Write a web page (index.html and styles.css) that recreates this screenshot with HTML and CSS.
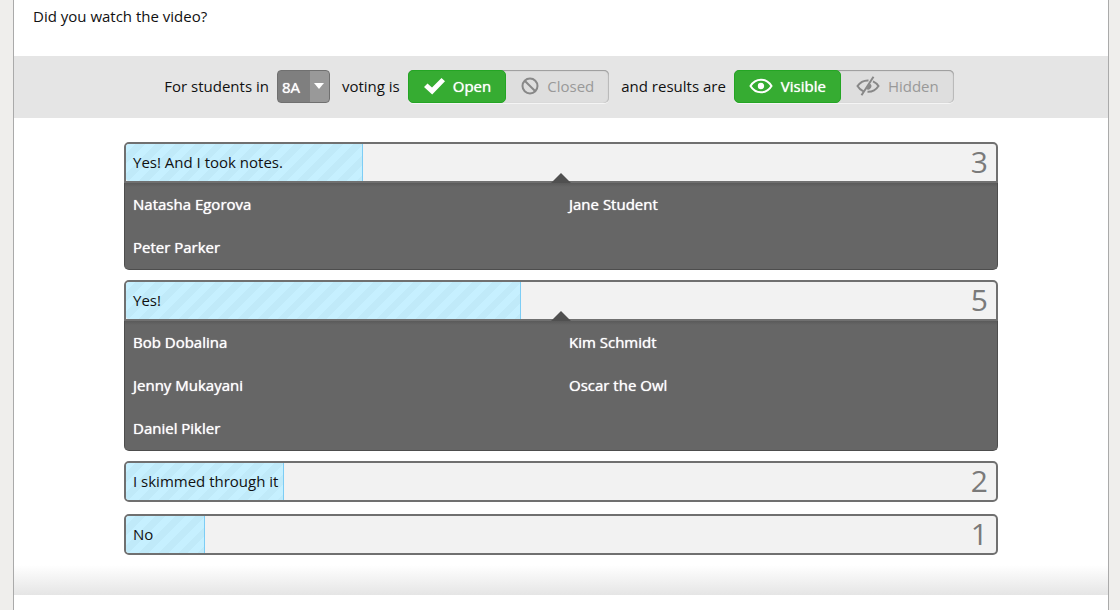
FILE: index.html
```html
<!DOCTYPE html>
<html lang="en">
<head>
<meta charset="utf-8">
<title>Class poll</title>
<link rel="stylesheet" href="styles.css">
</head>
<body>
<main class="sheet">
  <section class="poll">
    <p class="question">Did you watch the video?</p>

    <div class="controls">
      <label for="group">For students in</label>
      <span class="picker">
        <select id="group"><option>8A</option></select>
        <svg class="picker-arrow" viewBox="0 0 10 6" aria-hidden="true"><path d="M0 0h10L5 6z"/></svg>
      </span>
      <span class="label-voting">voting is</span>
      <div class="switch" role="group" aria-label="Voting">
        <button type="button" class="choice choice-on" aria-pressed="true">
          <svg class="icon icon-check" viewBox="0 0 22 18" aria-hidden="true"><path d="M1 10l3.500-3.500L9 10.500 18.500 1 22 4.300 9.200 17.500z"/></svg>
          Open
        </button>
        <button type="button" class="choice" aria-pressed="false">
          <svg class="icon icon-ban" viewBox="0 0 18 18" aria-hidden="true"><circle cx="9" cy="9" r="7.500"/><path d="M3.700 3.700l10.600 10.600"/></svg>
          Closed
        </button>
      </div>
      <span class="label-results">and results are</span>
      <div class="switch" role="group" aria-label="Results">
        <button type="button" class="choice choice-on" aria-pressed="true">
          <svg class="icon icon-eye" viewBox="0 0 24 16" aria-hidden="true"><path d="M1.500 8C4 3.800 7.500 1.700 12 1.700S20 3.800 22.500 8C20 12.200 16.500 14.300 12 14.300S4 12.200 1.500 8z"/><circle class="pupil" cx="12" cy="8" r="3.200"/></svg>
          Visible
        </button>
        <button type="button" class="choice" aria-pressed="false">
          <svg class="icon icon-eye-off" viewBox="0 0 24 20" aria-hidden="true"><path d="M12.500 4.400C7.800 4.200 4 6.200 1.500 10c1.500 2.400 3.400 4.200 5.600 5.200M17 5.300c2.200 1 4.100 2.600 5.500 4.700-2.600 4-6.300 6-11 5.800M17.500.700L5.500 19.300"/><path class="pupil" d="M13.800 7.500a3.300 3.300 0 0 1-3.600 5.600z"/></svg>
          Hidden
        </button>
      </div>
    </div>

    <div class="results">
      <article class="answer answer-open">
        <div class="bar">
          <div class="fill" style="width: 27.27%"></div>
          <span class="text">Yes! And I took notes.</span>
          <span class="count">3</span>
          <span class="pointer"></span>
        </div>
        <ul class="voters"><li>Natasha Egorova</li><li>Jane Student</li><li>Peter Parker</li></ul>
      </article>
      <article class="answer answer-open">
        <div class="bar">
          <div class="fill" style="width: 45.45%"></div>
          <span class="text">Yes!</span>
          <span class="count">5</span>
          <span class="pointer"></span>
        </div>
        <ul class="voters"><li>Bob Dobalina</li><li>Kim Schmidt</li><li>Jenny Mukayani</li><li>Oscar the Owl</li><li>Daniel Pikler</li></ul>
      </article>
      <article class="answer">
        <div class="bar">
          <div class="fill" style="width: 18.18%"></div>
          <span class="text">I skimmed through it</span>
          <span class="count">2</span>
        </div>
      </article>
      <article class="answer">
        <div class="bar">
          <div class="fill" style="width: 9.09%"></div>
          <span class="text">No</span>
          <span class="count">1</span>
        </div>
      </article>
    </div>
  </section>
</main>
</body>
</html>
```

FILE: styles.css
```css
* { box-sizing: border-box; }

body {
  margin: 0;
  background: #efeeec;
  color: #111;
  font: 15px/20px "Open Sans", "Noto Sans", sans-serif;
}

.sheet {
  min-height: 100vh;
  margin: 0 11px 0 13px;
  border: solid #aaa;
  border-width: 0 1px;
  background: #fff;
}

.poll {
  padding-bottom: 40px;
  background: linear-gradient(to top, #e5e5e5, #fff 30px);
}

.question {
  margin: 0;
  padding: 6px 19px 30px;
}

.controls {
  display: flex;
  align-items: center;
  justify-content: center;
  padding: 14px 4px 15px 0;
  background: #e5e5e5;
}

.controls > label,
.label-voting,
.label-results { padding-bottom: 2px; }

.picker {
  position: relative;
  margin: 0 12px 0 8px;
}

.picker select {
  display: block;
  width: 53px;
  height: 33px;
  padding: 0 0 0 4px;
  border: 1px solid #707070;
  border-radius: 4px;
  appearance: none;
  background: linear-gradient(to right, #7f7f7f 32px, #999 32px);
  color: #fff;
  font: 500 15px/20px "Open Sans", "Noto Sans", sans-serif;
  text-shadow: 0 0 1px #fff;
}

.picker-arrow {
  position: absolute;
  top: 13px;
  right: 6px;
  width: 10px;
  height: 6px;
  fill: #fff;
  pointer-events: none;
}

.switch {
  display: flex;
  height: 33px;
  border-radius: 5px;
  background: #dedede;
  box-shadow: inset 0 1px 1px #999, inset -1px 0 1px #bbb, 0 1px 0 #f5f5f5;
}

.label-voting { margin-right: 8px; }
.label-results { margin: 0 8px 0 12px; }

.choice {
  display: flex;
  align-items: center;
  gap: 8px;
  padding: 0 15px 2px;
  border: 0;
  border-radius: 5px;
  background: none;
  color: #999;
  font: 15px/20px "Open Sans", "Noto Sans", sans-serif;
}

.choice-on {
  border: 1px solid #24a524;
  background: #36ac32;
  color: #fff;
  font-weight: 500;
  text-shadow: 0 0 1px #fff;
  padding: 0 14px 1px;
}

.icon { fill: none; stroke: #888; stroke-width: 2; }
.icon-check { width: 22px; height: 18px; fill: #fff; stroke: none; }
.icon-ban { width: 18px; height: 18px; }
.icon-eye { width: 24px; height: 16px; stroke: #fff; }
.icon-eye .pupil { fill: #fff; stroke: none; }
.icon-eye-off { width: 24px; height: 20px; }
.icon-eye-off .pupil { fill: #888; stroke: none; }

.results { padding: 24px 110px 0; }

.answer { margin-bottom: 12px; }
.answer-open { margin-bottom: 10px; }
.answer:last-child { margin-bottom: 0; }

.bar {
  position: relative;
  display: flex;
  align-items: center;
  justify-content: space-between;
  height: 41px;
  padding: 0 8px 1px 7px;
  border: 2px solid #707070;
  border-radius: 5px;
  background: #f2f2f2;
}

.answer-open .bar { border-radius: 5px 5px 0 0; }

.fill {
  position: absolute;
  inset: 0 auto 0 0;
  border-right: 1px solid #7dcdf5;
  border-radius: 3px 0 0 3px;
  background: repeating-linear-gradient(135deg, #c6f0ff 0 7px, #c0eaf9 7px 14px);
}

.text {
  position: relative;
  padding-bottom: 1px;
}

.count {
  color: #7a7a7a;
  font-size: 30px;
  line-height: 36px;
}

.pointer {
  position: absolute;
  left: 50%;
  bottom: -2px;
  margin-left: -10px;
  border: solid transparent;
  border-width: 0 10px 10px;
  border-bottom-color: #505050;
}

.voters {
  display: grid;
  grid-template-columns: 1fr 1fr;
  margin: 0;
  padding: 0;
  border: solid #4d4d4d;
  border-width: 0 1px 1px;
  border-radius: 0 0 5px 5px;
  background: linear-gradient(#5a5a5a, #666 4px);
  color: #fff;
  font-weight: 500;
  text-shadow: 0 0 1px #fff;
  list-style: none;
}

.voters li { padding: 11px 8px 12px; }
```
